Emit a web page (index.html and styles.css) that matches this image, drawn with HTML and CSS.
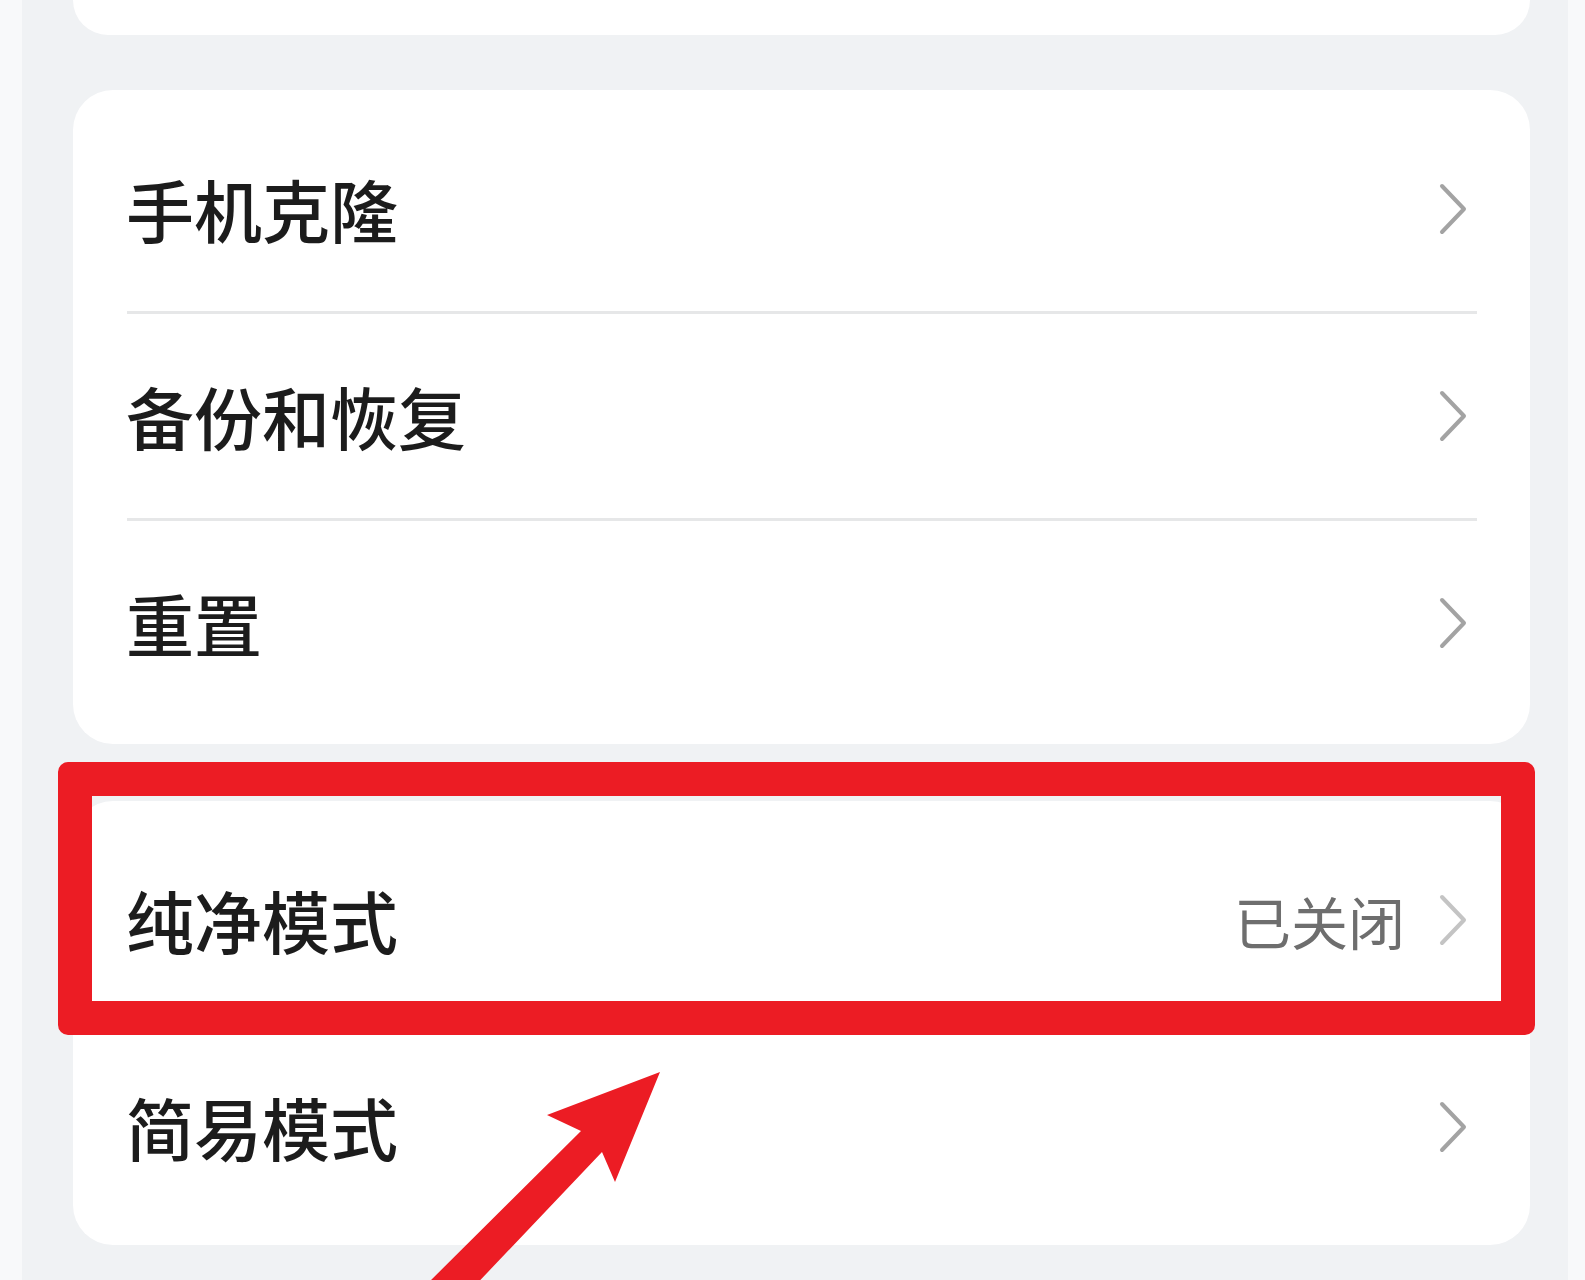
FILE: index.html
```html
<!DOCTYPE html>
<html lang="zh-CN">
<head>
<meta charset="utf-8">
<title>设置</title>
<link rel="stylesheet" href="styles.css">
</head>
<body>
<div class="page">
  <div class="screen">
    <div class="card card-top"></div>

    <div class="card">
      <div class="row"><span class="label">手机克隆</span><svg class="chev" viewBox="0 0 30 54"><path d="M4 4 L26 27 L4 50"/></svg></div>
      <div class="divider"></div>
      <div class="row"><span class="label">备份和恢复</span><svg class="chev" viewBox="0 0 30 54"><path d="M4 4 L26 27 L4 50"/></svg></div>
      <div class="divider"></div>
      <div class="row"><span class="label">重置</span><svg class="chev" viewBox="0 0 30 54"><path d="M4 4 L26 27 L4 50"/></svg></div>
    </div>

    <div class="card card-last">
      <div class="row"><span class="label">纯净模式</span><span class="value">已关闭</span><svg class="chev light" viewBox="0 0 30 54"><path d="M4 4 L26 27 L4 50"/></svg></div>
      <div class="divider"></div>
      <div class="row"><span class="label">简易模式</span><svg class="chev" viewBox="0 0 30 54"><path d="M4 4 L26 27 L4 50"/></svg></div>
    </div>
  </div>

  <div class="highlight"></div>
  <svg class="arrow" viewBox="0 0 1585 1280">
    <polygon points="660,1072 615,1182 602,1152 449,1313 423,1288 581,1131 547,1115"/>
  </svg>
</div>
</body>
</html>
```

FILE: styles.css
```css
* { box-sizing: border-box; }

html, body {
  margin: 0;
  padding: 0;
  background: #f8f9fa;
  font-family: "Noto Sans CJK SC", "Noto Sans", sans-serif;
}

.page {
  position: relative;
  width: 1585px;
  height: 1280px;
  overflow: hidden;
  background: #f8f9fa;
}

.screen {
  margin-left: 22px;
  width: 1546px;
  height: 1280px;
  background: #f0f2f4;
  padding: 0 38px 0 51px;
  display: flex;
  flex-direction: column;
  gap: 55px;
}

.card {
  background: #ffffff;
  border-radius: 40px;
  padding: 17px 0 19px;
}

.card-top {
  height: 35px;
  padding: 0;
  border-radius: 0 0 40px 40px;
}

.card-last {
  margin-top: 2px;
  padding: 17px 0 16px;
}

.row {
  height: 204px;
  display: flex;
  align-items: center;
  padding: 0 62px 0 53px;
}

.label {
  flex: 1;
  font-size: 68px;
  font-weight: 500;
  color: #1c1c1c;
  line-height: 1;
}

.value {
  font-size: 57px;
  font-weight: 400;
  color: #6e6e6e;
  line-height: 1;
  margin-right: 33px;
}

.chev {
  width: 30px;
  height: 54px;
  flex: none;
}

.chev path {
  fill: none;
  stroke: #a3a3a3;
  stroke-width: 4;
  stroke-linecap: round;
  stroke-linejoin: round;
}

.chev.light path {
  stroke: #c4c4c4;
}

.divider {
  height: 3px;
  background: #e6e7e8;
  margin: 0 53px 0 54px;
}

.highlight {
  position: absolute;
  left: 58px;
  top: 762px;
  width: 1477px;
  height: 273px;
  border: 34px solid #ec1c24;
  border-radius: 10px;
}

.arrow {
  position: absolute;
  left: 0;
  top: 0;
  width: 1585px;
  height: 1280px;
}

.arrow polygon {
  fill: #ec1c24;
}
```
